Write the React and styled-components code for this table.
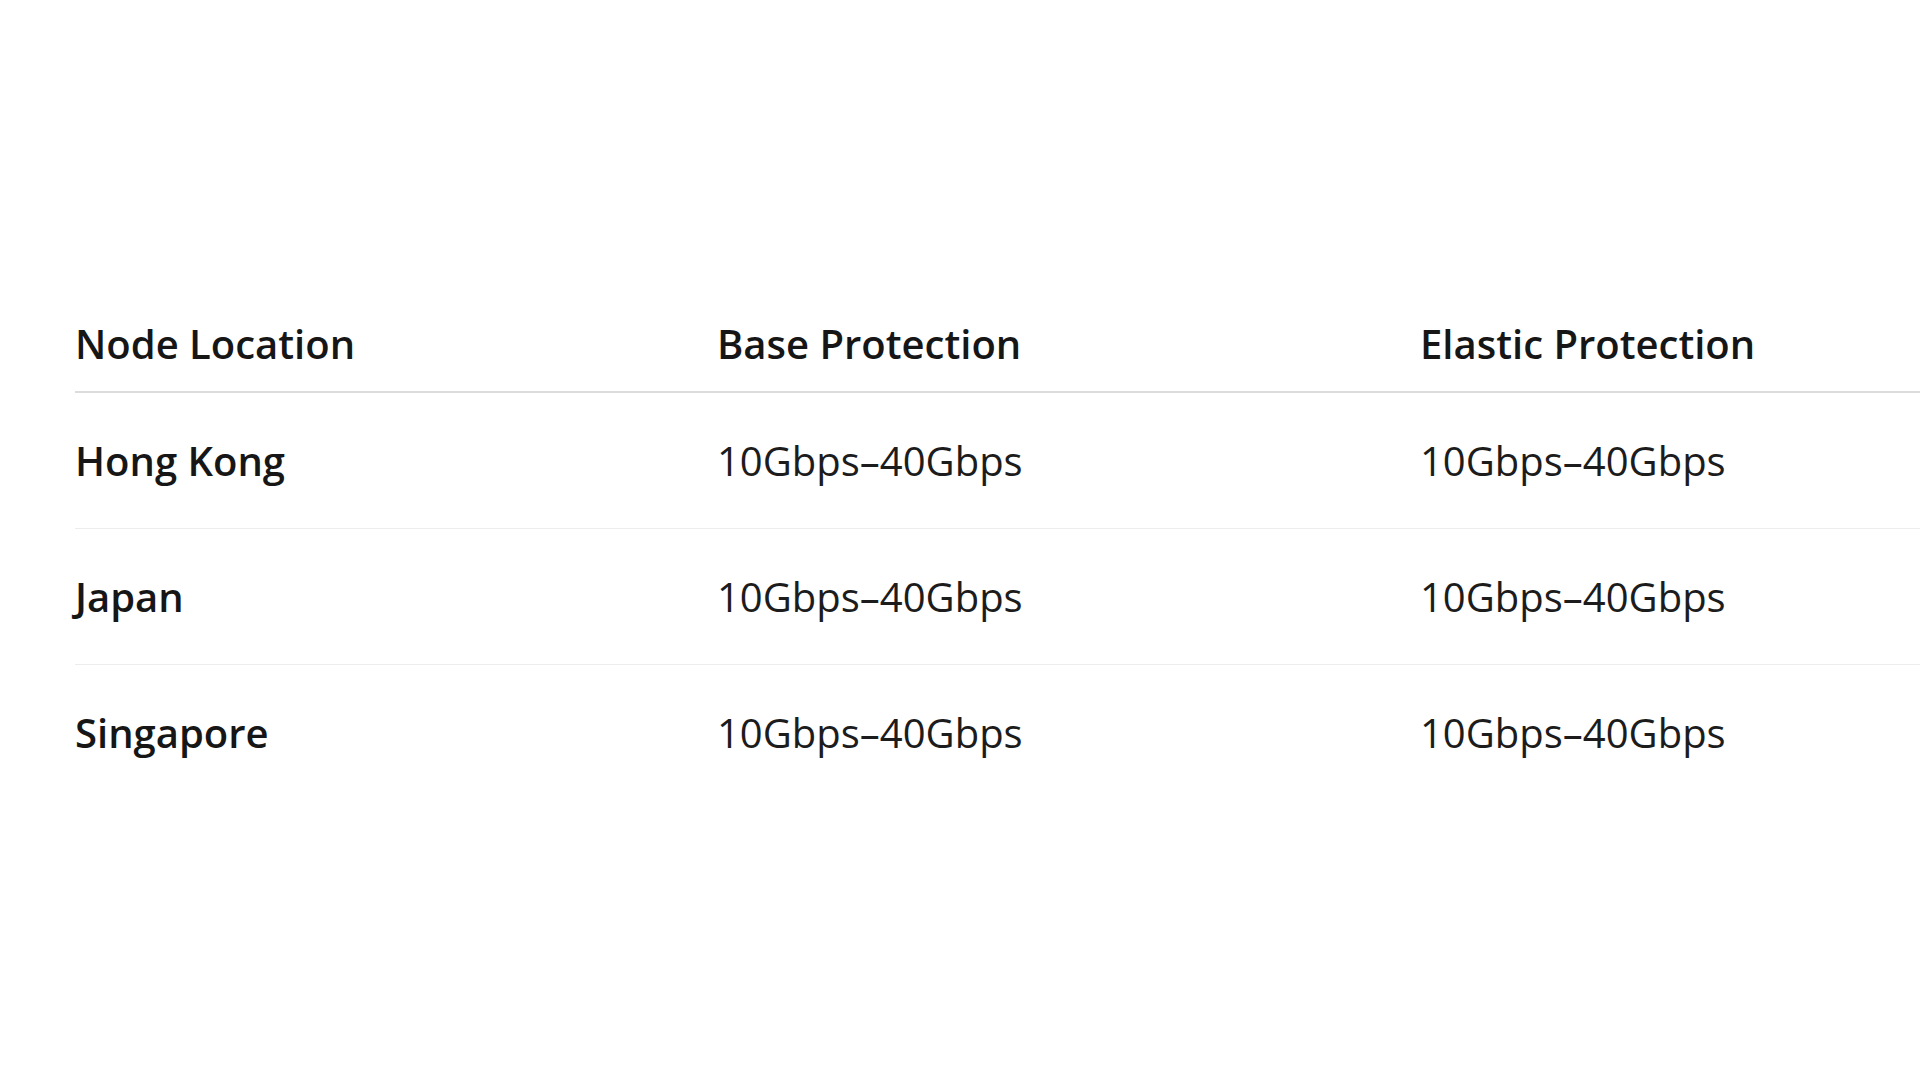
import styled, { createGlobalStyle } from 'styled-components';

const GlobalStyle = createGlobalStyle`
html, body {
    margin: 0;
    padding: 0;
    background: #ffffff;
    overflow: hidden;
}
body {
    font-family: "Open Sans", "Noto Sans", sans-serif;
    color: #1a1a1a;
}
`

const rows = [
    { node: 'Hong Kong', base: '10Gbps–40Gbps', elastic: '10Gbps–40Gbps' },
    { node: 'Japan', base: '10Gbps–40Gbps', elastic: '10Gbps–40Gbps' },
    { node: 'Singapore', base: '10Gbps–40Gbps', elastic: '10Gbps–40Gbps' },
];

const App = () => {
    return (
        <>
            <GlobalStyle />
            <StyledSection>
                <Table>
                    <colgroup>
                        <col style={{ width: 642 }} />
                        <col style={{ width: 703 }} />
                        <col />
                    </colgroup>
                    <thead>
                        <tr>
                            <HeadCell>Node Location</HeadCell>
                            <HeadCell>Base Protection</HeadCell>
                            <HeadCell>Elastic Protection</HeadCell>
                        </tr>
                    </thead>
                    <tbody>
                        {rows.map((row, i) => (
                            <Row key={row.node} $last={i === rows.length - 1}>
                                <Cell $bold>{row.node}</Cell>
                                <Cell>{row.base}</Cell>
                                <Cell>{row.elastic}</Cell>
                            </Row>
                        ))}
                    </tbody>
                </Table>
            </StyledSection>
        </>
    );
};

//Styled Components
const StyledSection = styled.section`
min-height: 100vh;
padding: 297px 0 0 75px;
box-sizing: border-box;
`

const Table = styled.table`
width: calc(100% + 40px);
border-collapse: collapse;
table-layout: fixed;
`

const HeadCell = styled.th`
text-align: left;
font-size: 40px;
line-height: 56px;
font-weight: 600;
color: #161616;
padding: 19px 0 19px 0;
border-bottom: 2px solid #dcdcdc;
white-space: nowrap;
`

const Row = styled.tr`
border-bottom: ${props => props.$last ? 'none' : '1px solid #ececec'};
`

const Cell = styled.td`
font-size: 40px;
line-height: 56px;
font-weight: ${props => props.$bold ? 600 : 400};
color: ${props => props.$bold ? '#161616' : '#1c1c1c'};
padding: 40px 0 39px 0;
white-space: nowrap;
`

export default App;
